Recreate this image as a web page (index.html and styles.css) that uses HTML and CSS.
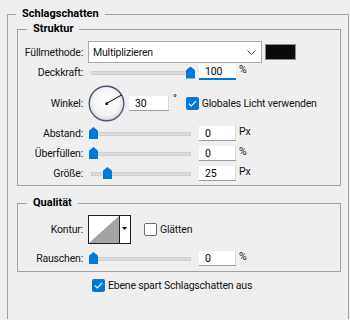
FILE: index.html
```html
<!DOCTYPE html>
<html lang="de">
<head>
    <meta charset="UTF-8">
    <title>Schlagschatten</title>
    <link rel="stylesheet" href="styles.css">
</head>
<body>
    <fieldset class="group outer">
        <legend>Schlagschatten</legend>

        <fieldset class="group inner">
            <legend>Struktur</legend>

            <div class="row row-blend">
                <span class="label">Füllmethode:</span>
                <div class="select">
                    <span>Multiplizieren</span>
                    <svg class="chevron" width="9" height="5" viewBox="0 0 9 5"><polyline points="0.5,0.5 4.5,4.5 8.5,0.5" fill="none" stroke="#555" stroke-width="1"/></svg>
                </div>
                <span class="swatch"></span>
            </div>

            <div class="row row-opacity">
                <span class="label">Deckkraft:</span>
                <div class="slider"><span class="track"></span><span class="thumb" style="left: 98px"></span></div>
                <span class="field focused">100</span>
                <span class="unit">%</span>
            </div>

            <div class="row row-angle">
                <span class="label">Winkel:</span>
                <svg class="dial" width="37" height="37" viewBox="0 0 37 37">
                    <defs>
                        <radialGradient id="dialFill" cx="50%" cy="45%" r="55%">
                            <stop offset="0%" stop-color="#ffffff"/>
                            <stop offset="70%" stop-color="#f4f4f4"/>
                            <stop offset="100%" stop-color="#d4d4d8"/>
                        </radialGradient>
                    </defs>
                    <circle cx="18.5" cy="18.5" r="17.3" fill="url(#dialFill)" stroke="#4a5778" stroke-width="1.4"/>
                    <line x1="18.5" y1="18.5" x2="33.6" y2="10" stroke="#000" stroke-width="1"/>
                    <rect x="17.5" y="17.5" width="2.4" height="2.4" fill="#000"/>
                </svg>
                <span class="field angle">30</span>
                <span class="degree">°</span>
                <span class="check on"><svg width="9" height="7" viewBox="0 0 9 7"><polyline points="0.8,3.6 3.3,6 8.2,0.8" fill="none" stroke="#fff" stroke-width="1.1"/></svg></span>
                <span class="check-label">Globales Licht verwenden</span>
            </div>

            <div class="row row-slider first">
                <span class="label">Abstand:</span>
                <div class="slider"><span class="track"></span><span class="thumb" style="left: 1px"></span></div>
                <span class="field">0</span>
                <span class="unit">Px</span>
            </div>

            <div class="row row-slider">
                <span class="label">Überfüllen:</span>
                <div class="slider"><span class="track"></span><span class="thumb" style="left: 1px"></span></div>
                <span class="field">0</span>
                <span class="unit">%</span>
            </div>

            <div class="row row-slider">
                <span class="label">Größe:</span>
                <div class="slider"><span class="track"></span><span class="thumb" style="left: 15px"></span></div>
                <span class="field">25</span>
                <span class="unit">Px</span>
            </div>
        </fieldset>

        <fieldset class="group inner quality">
            <legend>Qualität</legend>

            <div class="row row-contour">
                <span class="label">Kontur:</span>
                <svg class="contour" width="43" height="29" viewBox="0 0 43 29">
                    <rect x="0.5" y="0.5" width="42" height="28" fill="#fff" stroke="#1e1e1e"/>
                    <polygon points="1,28 31,1 31,28" fill="#a3a3a3"/>
                    <line x1="31.5" y1="0" x2="31.5" y2="29" stroke="#1e1e1e"/>
                    <polygon points="34,12 39,12 36.5,15" fill="#000"/>
                </svg>
                <span class="check off"></span>
                <span class="check-label">Glätten</span>
            </div>

            <div class="row row-slider noise">
                <span class="label">Rauschen:</span>
                <div class="slider"><span class="track"></span><span class="thumb" style="left: 1px"></span></div>
                <span class="field">0</span>
                <span class="unit">%</span>
            </div>
        </fieldset>

        <div class="row row-bottom">
            <span class="check on"><svg width="9" height="7" viewBox="0 0 9 7"><polyline points="0.8,3.6 3.3,6 8.2,0.8" fill="none" stroke="#fff" stroke-width="1.1"/></svg></span>
            <span class="check-label">Ebene spart Schlagschatten aus</span>
        </div>
    </fieldset>
</body>
</html>
```

FILE: styles.css
```css
body {
    margin: 0;
    height: 320px;
    overflow: hidden;
    background: #efefef;
    font-family: Roboto, 'Liberation Sans', sans-serif;
    font-size: 10.5px;
    letter-spacing: -0.2px;
    color: #141414;
}

.group {
    margin: 0;
    min-width: 0;
    border: 1px solid #a3a3a3;
}

.group > legend {
    font-weight: bold;
    font-size: 11px;
    letter-spacing: 0;
    color: #000;
    padding: 0 6px;
}

.outer {
    margin: 6px 1px 0 7px;
    padding: 0 7px 27px 9px;
    border-bottom: 0;
}

.outer > legend {
    margin-left: -1px;
    line-height: 16px;
}

.inner {
    padding: 5px 0 4px 0;
}

.inner > legend {
    margin-left: 9px;
    line-height: 14px;
}

.quality {
    margin-top: 10px;
    padding-bottom: 5px;
}

.row {
    display: flex;
    align-items: center;
}

.label {
    flex: none;
    width: 65px;
    margin-right: 5px;
    text-align: right;
}

.row-blend {
    height: 22px;
}

.select {
    box-sizing: border-box;
    width: 174px;
    height: 22px;
    padding: 0 5px 0 4px;
    background: #fff;
    border: 1px solid #a9a9a9;
    display: flex;
    align-items: center;
    justify-content: space-between;
}

.swatch {
    box-sizing: border-box;
    width: 31px;
    height: 16px;
    margin-left: 3px;
    background: #0a0a0a;
    border: 1px solid #8a8a8a;
}

.row-opacity {
    height: 16px;
    margin-top: 1px;
}

.slider {
    position: relative;
    flex: none;
    width: 108px;
    height: 15px;
}

.track {
    display: block;
    height: 2px;
    margin: 6px 5px 0 3px;
    background: #dcdcdc;
    border: 1px solid #d0d0d0;
}

.thumb {
    position: absolute;
    top: 1px;
    width: 9px;
    height: 12px;
    background: #0078d7;
    clip-path: polygon(50% 0, 100% 32%, 100% 100%, 0 100%, 0 32%);
}

.row-opacity .thumb {
    top: 2px;
}

.field {
    box-sizing: border-box;
    flex: none;
    width: 37px;
    height: 15px;
    margin-left: 3px;
    padding-left: 6px;
    line-height: 15px;
    background: #fff;
    color: #000;
    box-shadow: inset 0 -1px 0 #9c9c9c, inset -1px 0 0 #d8d8d8;
}

.field.focused {
    height: 16px;
    line-height: 16px;
    box-shadow: inset 0 -2px 0 #0078d7;
}

.unit {
    align-self: flex-start;
    margin-left: 3px;
    line-height: 12px;
}

.row-angle {
    height: 37px;
    margin-top: 5px;
}

.dial {
    flex: none;
}

.field.angle {
    width: 40px;
    margin-left: 4px;
}

.degree {
    align-self: flex-start;
    margin: 9px 0 0 4px;
    line-height: 10px;
}

.check {
    box-sizing: border-box;
    flex: none;
    width: 13px;
    height: 13px;
    border-radius: 2px;
    display: flex;
    align-items: center;
    justify-content: center;
}

.check.on {
    background: #0078d7;
}

.check.off {
    background: #fff;
    border: 1px solid #6e6e6e;
}

.check-label {
    margin-left: 3px;
}

.row-angle .check {
    margin-left: 9px;
}

.row-slider {
    height: 15px;
    margin-top: 5px;
}

.row-slider.first {
    margin-top: 4px;
}

.row-contour {
    height: 28px;
}

.contour {
    flex: none;
    margin-top: 1px;
}

.row-contour .check {
    margin-left: 13px;
}

.row-slider.noise {
    margin-top: 8px;
}

.row-bottom {
    height: 13px;
    margin: 7px 0 0 75px;
}
```
